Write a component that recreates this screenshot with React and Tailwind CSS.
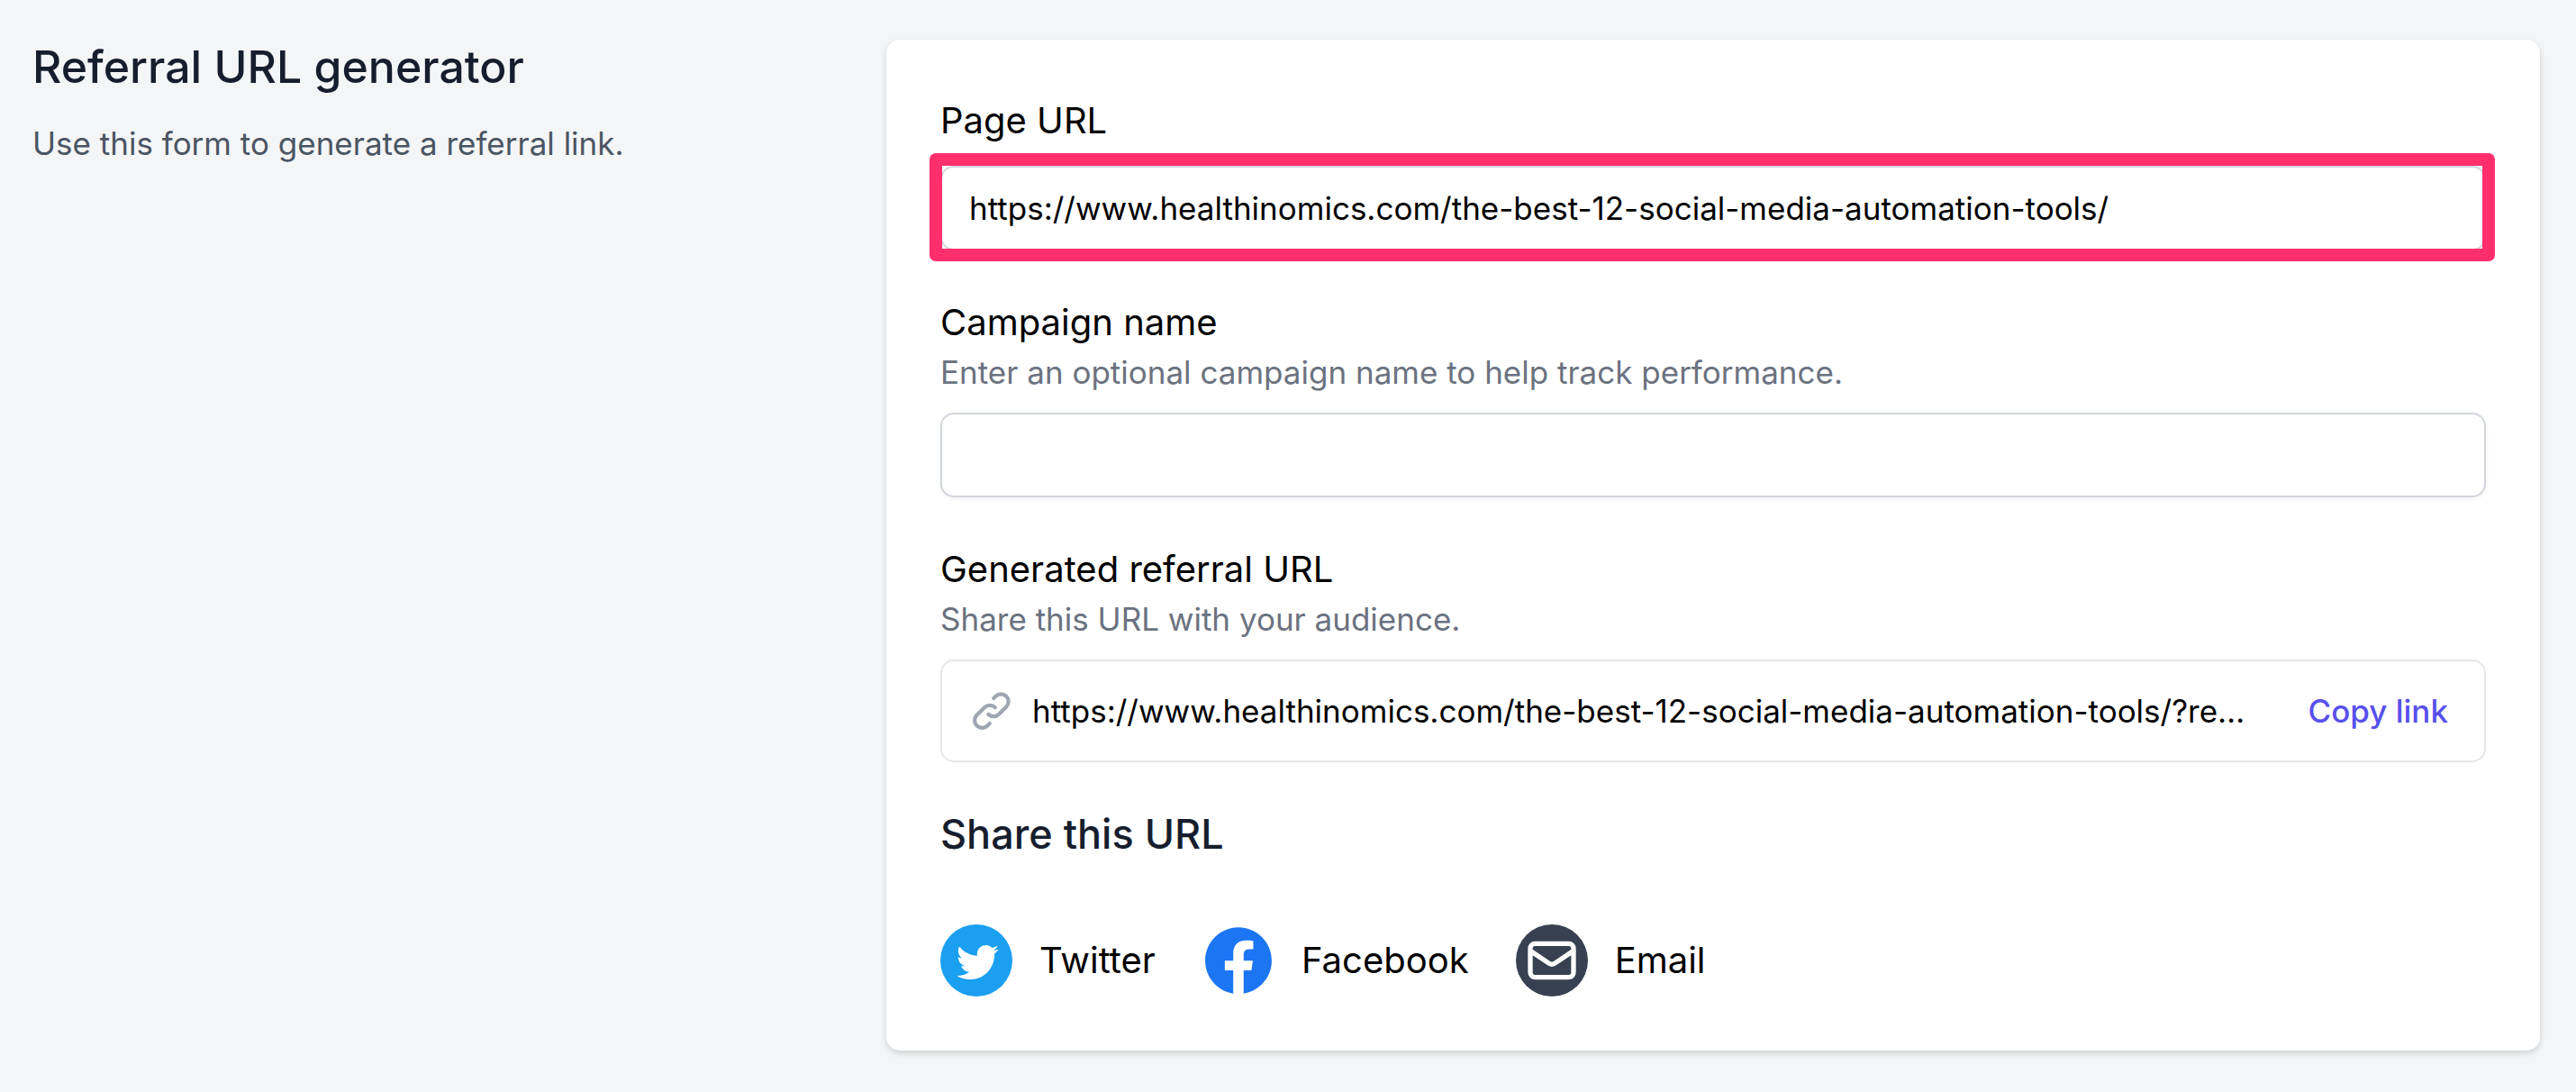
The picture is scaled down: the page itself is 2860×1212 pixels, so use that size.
import React, { useState } from "react";
import clsx from "clsx";

function LinkIcon({ className }) {
  return (
    <svg
      className={className}
      viewBox="0 0 24 24"
      fill="none"
      stroke="currentColor"
      strokeWidth={2}
      strokeLinecap="round"
      strokeLinejoin="round"
      aria-hidden="true"
    >
      <path d="M13.828 10.172a4 4 0 00-5.656 0l-4 4a4 4 0 105.656 5.656l1.102-1.101m-.758-4.899a4 4 0 005.656 0l4-4a4 4 0 00-5.656-5.656l-1.1 1.1" />
    </svg>
  );
}

function TwitterIcon() {
  return (
    <svg className="size-20" viewBox="0 0 400 400" aria-hidden="true">
      <circle cx="200" cy="200" r="200" fill="#1a9ff1" />
      <path
        fill="#fff"
        d="M163.4 305.5c88.7 0 137.2-73.5 137.2-137.2 0-2.1 0-4.2-.1-6.2 9.4-6.8 17.6-15.3 24.1-25-8.6 3.8-17.9 6.4-27.7 7.6 10-6 17.6-15.4 21.2-26.7-9.3 5.5-19.6 9.5-30.6 11.7-8.8-9.4-21.3-15.2-35.2-15.2-26.6 0-48.2 21.6-48.2 48.2 0 3.8.4 7.5 1.3 11-40.1-2-75.6-21.2-99.4-50.4-4.1 7.1-6.5 15.4-6.5 24.2 0 16.7 8.5 31.5 21.5 40.1-7.9-.2-15.3-2.4-21.8-6v.6c0 23.4 16.6 42.8 38.7 47.3-4 1.1-8.3 1.7-12.7 1.7-3.1 0-6.1-.3-9.1-.9 6.1 19.2 23.9 33.1 45 33.5-16.5 12.9-37.3 20.6-59.9 20.6-3.9 0-7.7-.2-11.5-.7 21.1 13.8 46.5 21.8 73.7 21.8"
      />
    </svg>
  );
}

function FacebookIcon() {
  return (
    <svg className="size-20" viewBox="-1 -1 26 26" fill="#1c76f3" aria-hidden="true">
      <path d="M24 12.073c0-6.627-5.373-12-12-12s-12 5.373-12 12c0 5.99 4.388 10.954 10.125 11.854v-8.385H7.078v-3.47h3.047V9.43c0-3.007 1.792-4.669 4.533-4.669 1.312 0 2.686.235 2.686.235v2.953H15.83c-1.491 0-1.956.925-1.956 1.874v2.25h3.328l-.532 3.47h-2.796v8.385C19.612 23.027 24 18.062 24 12.073z" />
    </svg>
  );
}

function EmailIcon() {
  return (
    <span className="flex size-20 items-center justify-center rounded-full bg-[#374151] text-white">
      <svg
        className="size-16"
        viewBox="0 0 24 24"
        fill="none"
        stroke="currentColor"
        strokeWidth={2}
        strokeLinecap="round"
        strokeLinejoin="round"
        aria-hidden="true"
      >
        <path d="M3 8l7.89 5.26a2 2 0 002.22 0L21 8M5 19h14a2 2 0 002-2V7a2 2 0 00-2-2H5a2 2 0 00-2 2v10a2 2 0 002 2z" />
      </svg>
    </span>
  );
}

function TextField({ id, label, hint, value, onChange, highlighted }) {
  return (
    <div>
      <label htmlFor={id} className="block text-[40px] leading-[60px] text-black">
        {label}
      </label>
      {hint && (
        <p id={`${id}-hint`} className="text-[35px] leading-[50px] text-[#6b7280]">
          {hint}
        </p>
      )}
      <div className="relative mt-5">
        <input
          id={id}
          type="text"
          value={value}
          onChange={(e) => onChange(e.target.value)}
          aria-describedby={hint ? `${id}-hint` : undefined}
          className="block w-full rounded-[15px] border-2 border-[#d2d6dc] bg-white px-[30px] py-5 text-[35px] leading-[50px] text-black shadow-[0_2px_5px_rgba(0,0,0,0.05)] outline-none"
        />
        {highlighted && (
          <span
            className={clsx(
              "pointer-events-none absolute -top-3.5 -right-2.5 -bottom-3 -left-3",
              "rounded-[7px] border-[14px] border-[#ff2e6c]"
            )}
          />
        )}
      </div>
    </div>
  );
}

const shareTargets = [
  { name: "Twitter", icon: TwitterIcon },
  { name: "Facebook", icon: FacebookIcon },
  { name: "Email", icon: EmailIcon },
];

export default function App() {
  const [pageUrl, setPageUrl] = useState(
    "https://www.healthinomics.com/the-best-12-social-media-automation-tools/"
  );
  const [campaign, setCampaign] = useState("");

  const referralUrl =
    `${pageUrl}?ref=12` +
    (campaign ? `&campaign=${encodeURIComponent(campaign)}` : "");

  const handleCopy = () => {
    navigator.clipboard?.writeText(referralUrl);
  };

  return (
    <div className="min-h-screen bg-[#f4f5f7] pt-11 pr-10 pb-11 pl-9 font-['Inter',sans-serif]">
      <div className="grid grid-cols-3 gap-[60px]">
        {/* Intro */}
        <div>
          <h1 className="text-[50px] leading-[60px] font-medium text-[#161e2e]">
            Referral URL generator
          </h1>
          <p className="mt-[30px] text-[35px] leading-[50px] text-[#4b5563]">
            Use this form to generate a referral link.
          </p>
        </div>

        {/* Form card */}
        <div className="col-span-2 rounded-[15px] bg-white p-[60px] shadow-[0_3px_8px_rgba(0,0,0,0.1),0_3px_5px_rgba(0,0,0,0.06)]">
          <div className="flex flex-col gap-[50px]">
            <TextField
              id="page-url"
              label="Page URL"
              value={pageUrl}
              onChange={setPageUrl}
              highlighted
            />
            <TextField
              id="campaign"
              label="Campaign name"
              hint="Enter an optional campaign name to help track performance."
              value={campaign}
              onChange={setCampaign}
            />

            {/* Generated link */}
            <div>
              <h2 className="text-[40px] leading-[60px] text-black">
                Generated referral URL
              </h2>
              <p className="text-[35px] leading-[50px] text-[#6b7280]">
                Share this URL with your audience.
              </p>
              <div className="mt-5 flex items-center rounded-[15px] border-2 border-[#e5e7eb] py-[30px] pr-10 pl-[30px] text-[35px] leading-[50px]">
                <LinkIcon className="size-[50px] shrink-0 text-[#9fa6b2]" />
                <span className="ml-5 min-w-0 flex-1 truncate text-black">
                  {referralUrl}
                </span>
                <button
                  type="button"
                  onClick={handleCopy}
                  className="ml-[60px] shrink-0 font-medium text-[#5850ec]"
                >
                  Copy link
                </button>
              </div>
            </div>

            {/* Share */}
            <div>
              <h2 className="text-[45px] leading-[60px] font-medium text-[#161e2e]">
                Share this URL
              </h2>
              <div className="mt-[70px] flex gap-[52px]">
                {shareTargets.map(({ name, icon: Icon }) => (
                  <a
                    key={name}
                    href="#"
                    className="flex items-center gap-[30px] text-[40px] leading-[60px] text-black"
                  >
                    <Icon />
                    {name}
                  </a>
                ))}
              </div>
            </div>
          </div>
        </div>
      </div>
    </div>
  );
}
